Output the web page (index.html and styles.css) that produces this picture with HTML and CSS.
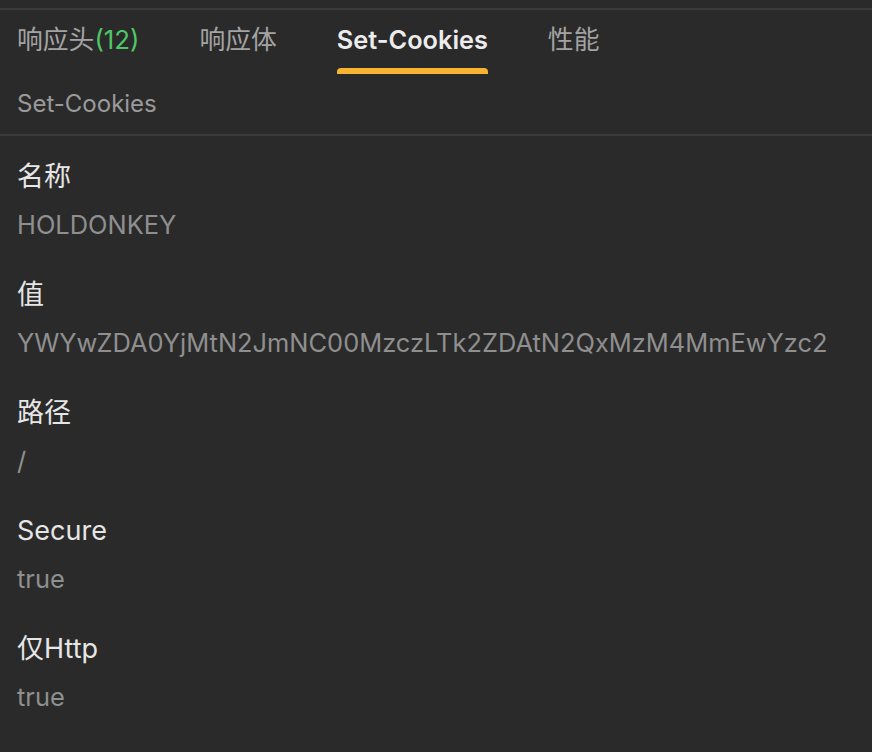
FILE: index.html
```html
<!DOCTYPE html>
<html lang="zh">
<head>
<meta charset="utf-8">
<link rel="stylesheet" href="styles.css">
</head>
<body>
<div class="topline"></div>
<nav class="tabs">
  <div class="tab">响应头<span class="count">(12)</span></div>
  <div class="tab">响应体</div>
  <div class="tab active">Set-Cookies</div>
  <div class="tab">性能</div>
</nav>
<div class="subtitle">Set-Cookies</div>
<div class="fields">
  <div class="field"><div class="label">名称</div><div class="value">HOLDONKEY</div></div>
  <div class="field"><div class="label">值</div><div class="value">YWYwZDA0YjMtN2JmNC00MzczLTk2ZDAtN2QxMzM4MmEwYzc2</div></div>
  <div class="field"><div class="label">路径</div><div class="value">/</div></div>
  <div class="field"><div class="label">Secure</div><div class="value">true</div></div>
  <div class="field"><div class="label">仅Http</div><div class="value">true</div></div>
</div>
</body>
</html>
```
FILE: styles.css
```css
html, body {
  margin: 0;
  background: #2a2a2a;
  font-family: Inter, "Noto Sans CJK SC", sans-serif;
  color: #e6e6e6;
}
body { width: 872px; height: 752px; overflow: hidden; }
.topline {
  height: 8px;
  border-bottom: 2px solid #3b3b3b;
}
.tabs {
  display: flex;
  gap: 60px;
  padding-left: 17px;
}
.tab {
  font-size: 25.8px;
  line-height: 32px;
  padding: 14px 0 18px;
  color: #a3a3a3;
  position: relative;
}
.tab .count { color: #4fc767; }
.tab.active {
  color: #ececec;
  font-weight: 600;
  font-size: 25.3px;
}
.tab.active::after {
  content: "";
  position: absolute;
  left: 0;
  right: 0;
  bottom: 0;
  height: 6px;
  background: #f8b431;
  border-radius: 4px 4px 0 0;
}
.subtitle {
  height: 60px;
  line-height: 60px;
  font-size: 24px;
  color: #9a9a9a;
  padding-left: 17px;
  border-bottom: 2px solid #3b3b3b;
}
.fields {
  padding: 17px 0 0 17px;
  display: flex;
  flex-direction: column;
  gap: 22px;
}
.label {
  font-size: 27px;
  line-height: 48px;
  color: #e6e6e6;
}
.value {
  font-size: 25.45px;
  line-height: 48px;
  color: #8f8f8f;
}
```
